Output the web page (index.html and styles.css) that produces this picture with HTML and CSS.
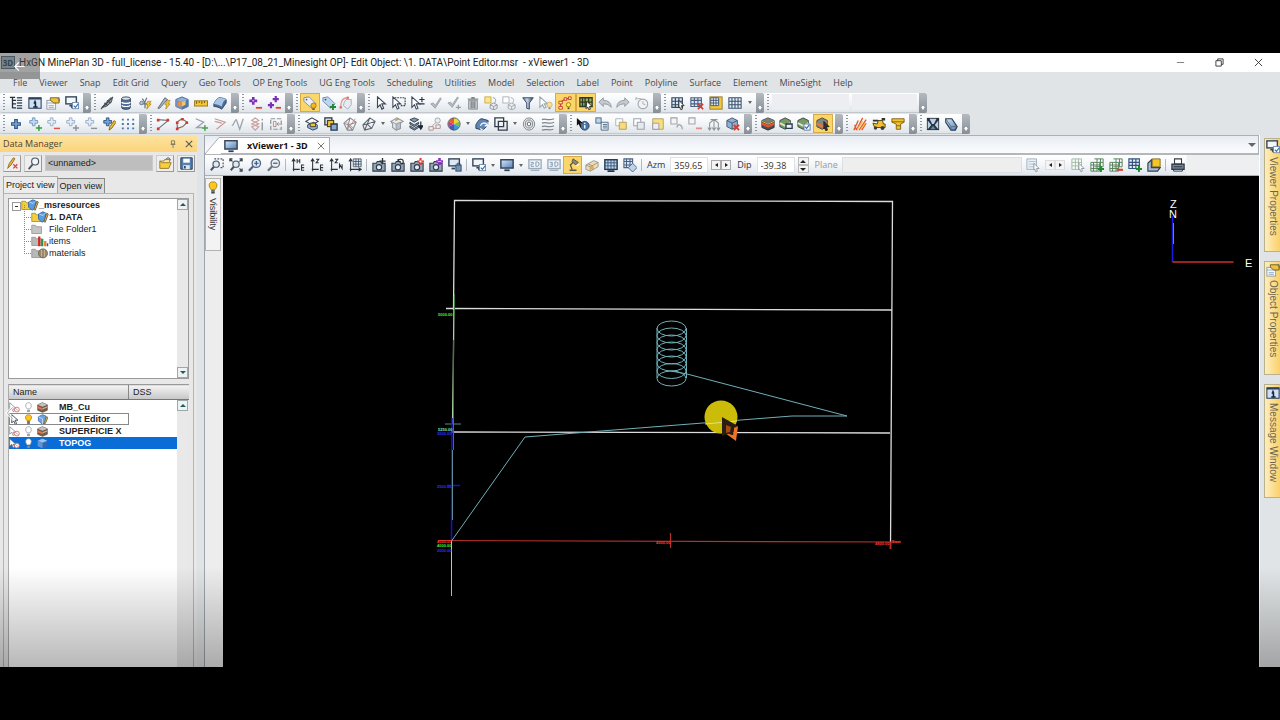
FILE: index.html
```html
<!DOCTYPE html>
<html lang="en">
<head>
<meta charset="utf-8">
<title>HxGN MinePlan 3D</title>
<link rel="stylesheet" href="styles.css">
</head>
<body>
<svg class="sprite" aria-hidden="true">
  <defs>
    <linearGradient id="g-blue" x1="0" y1="0" x2="1" y2="1"><stop offset="0" stop-color="#dbe9f8"/><stop offset="1" stop-color="#4f7fb8"/></linearGradient>
    <linearGradient id="g-steel" x1="0" y1="0" x2="1" y2="0"><stop offset="0" stop-color="#56708f"/><stop offset=".4" stop-color="#c6d8ea"/><stop offset="1" stop-color="#34495f"/></linearGradient>
  </defs>
  <symbol id="cursor" viewBox="0 0 16 16"><path d="M4 1v12l3-3 2 5 2-1-2-5h4z" fill="#fff" stroke="#3b4657" stroke-width="1.3"/></symbol>
  <symbol id="cursor-box" viewBox="0 0 16 16"><path d="M3 2h12v9h-5" fill="none" stroke="#3b4657" stroke-width="1.4" stroke-dasharray="2 1"/><path d="M1 1v12l3-3 2 5 2-1-2-5h4z" fill="#fff" stroke="#3b4657" stroke-width="1.2"/></symbol>
  <symbol id="cursor-pm" viewBox="0 0 16 16"><path d="M1 1v12l3-3 2 5 2-1-2-5h4z" fill="#fff" stroke="#3b4657" stroke-width="1.2"/><path d="M12.500 1v6M9.500 4h6M9.500 9h6" stroke="#2a3340" stroke-width="1.3"/></symbol>
  <symbol id="cursor-bulb" viewBox="0 0 16 16"><path d="M1 1v12l3-3 2 4 2-1-2-4h4z" fill="#fff" stroke="#9aa4b0" stroke-width="1.2"/><circle cx="12" cy="10" r="3" fill="#f6e29a" stroke="#c7b36a"/><path d="M11 14h2" stroke="#888" stroke-width="2"/></symbol>
  <symbol id="tree" viewBox="0 0 16 16"><path d="M1 1.500h6M4 2v12M4 5h4M4 9h4M4 13.500h4" stroke="#27303c" stroke-width="1.5" fill="none"/><path d="M9 2h6M9 5h6M9 8h6M9 11h6M9 14h6" stroke="#44566c" stroke-width="1.6"/></symbol>
  <symbol id="info" viewBox="0 0 16 16"><rect x="1" y="2" width="14" height="12" fill="#cfe0f3" stroke="#2b405c" stroke-width="1.2"/><path d="M1 3h14" stroke="#2b405c" stroke-width="2"/><path d="M8 5v2M6.500 8H8.500v4M6 12.500h5" stroke="#132238" stroke-width="1.8" fill="none"/></symbol>
  <symbol id="props" viewBox="0 0 16 16"><rect x="1" y="5" width="10" height="10" fill="#f5f8fb" stroke="#8a97a5"/><path d="M1 8h10M3 11h6M3 13h6" stroke="#8aa5c4"/><path d="M5 2h8l2 2v4H9L5 5z" fill="#efc23b" stroke="#6d5a20"/><path d="M13 2h2v4" stroke="#555" fill="none"/></symbol>
  <symbol id="monitor-check" viewBox="0 0 16 16"><rect x="1" y="1" width="12" height="8" fill="#f2f7fc" stroke="#35465a" stroke-width="1.6"/><path d="M5 11h3v3" stroke="#35465a" stroke-width="2" fill="none"/><rect x="8.500" y="7.500" width="7" height="7" fill="#fff" stroke="#6c87a8"/><path d="M10 11l2 2 3-4" stroke="#3972b0" fill="none" stroke-width="1.3"/></symbol>
  <symbol id="monitor-lock" viewBox="0 0 16 16"><rect x="1" y="1" width="12" height="8" fill="#dce9f6" stroke="#35465a" stroke-width="1.6"/><path d="M4 12h4" stroke="#35465a" stroke-width="2"/><rect x="9" y="8" width="6" height="7" fill="#7293b8" stroke="#2d4260"/><path d="M10.500 8V6h3v2" fill="none" stroke="#2d4260"/></symbol>
  <symbol id="monitor" viewBox="0 0 16 16"><rect x="1" y="2" width="14" height="9.500" fill="url(#g-blue)" stroke="#2f3f52" stroke-width="1.6"/><path d="M5 14h6" stroke="#2f3f52" stroke-width="2"/></symbol>
  <symbol id="monitor-2" viewBox="0 0 16 16"><rect x="1" y="2" width="14" height="10" fill="#eef3f8" stroke="#9aabbd" stroke-width="1.5"/><path d="M3 14h10" stroke="#9aabbd" stroke-width="1.5"/><path d="M3 5h3v2H3.500v2.500H7M9 4.500v5h1.500l2-1v-3l-2-1z" stroke="#8295a9" fill="none"/></symbol>
  <symbol id="monitor-3" viewBox="0 0 16 16"><rect x="1" y="2" width="14" height="10" fill="#eef3f8" stroke="#9aabbd" stroke-width="1.5"/><path d="M3 14h10" stroke="#9aabbd" stroke-width="1.5"/><path d="M3 5h3v4.500H3M4 7h2M9 4.500v5h1.500l2-1v-3l-2-1z" stroke="#8295a9" fill="none"/></symbol>
  <symbol id="monitor-grid" viewBox="0 0 16 16"><rect x="1" y="2" width="14" height="11" fill="#bcd7f1" stroke="#23344a" stroke-width="1.6"/><path d="M1 5.500h14M1 9h14M4.500 2v11M8 2v11M11.500 2v11" stroke="#35506f"/><path d="M4 15h8" stroke="#23344a" stroke-width="2"/></symbol>
  <symbol id="drill" viewBox="0 0 16 16"><path d="M2 13L11 3l2-1 1 1-1 4-6 5z" fill="#9aa2aa" stroke="#3f464e"/><path d="M1 15L15 1M5 8l4 3M8 5l4 3" stroke="#3f464e" stroke-width="1.2"/></symbol>
  <symbol id="db" viewBox="0 0 16 16"><path d="M3 3v10c0 3 10 3 10 0V3z" fill="#4d6f9a" stroke="#2b3b50"/><ellipse cx="8" cy="3" rx="5" ry="2" fill="#d2e2f2" stroke="#2b3b50"/><path d="M3 7c1 2 9 2 10 0M3 10.500c1 2 9 2 10 0" fill="none" stroke="#fff" stroke-width="1.300"/></symbol>
  <symbol id="bolt-plant" viewBox="0 0 16 16"><path d="M2 9h11M5 3l3 5M10 2l-3 7M8 8v6" stroke="#65758a" stroke-width="1.4"/><circle cx="4" cy="8" r="2" fill="#b6c8dc" stroke="#65758a"/><path d="M11 6h4l-2 3h2l-5 6 1-5H9z" fill="#f4c42e" stroke="#a07b12" stroke-width=".7"/></symbol>
  <symbol id="bolt-pen" viewBox="0 0 16 16"><path d="M1 14L9 2l3 2-9 10z" fill="#a5b1bf" stroke="#56616e"/><path d="M12 5h3l-2 4h2l-5 6 1-5H9z" fill="#f4c42e" stroke="#a07b12" stroke-width=".7"/></symbol>
  <symbol id="cube-color" viewBox="0 0 16 16"><path d="M8 1l7 3v8l-7 3-7-3V4z" fill="#8cb2dc" stroke="#3f6090"/><path d="M1 4l7 3v8l-7-3z" fill="#6f93c4"/><path d="M8 7l7-3v8l-7 3z" fill="#5078b2"/><circle cx="6" cy="9" r="3" fill="#ec8a3e"/><path d="M8 7l4-2v5l-4 2z" fill="#f3c85f"/></symbol>
  <symbol id="ruler" viewBox="0 0 16 16"><rect x=".5" y="5.500" width="15" height="6" fill="#f6c531" stroke="#94741a"/><path d="M3 6v3M6 6v2M9 6v3M12 6v2" stroke="#5e480b"/></symbol>
  <symbol id="surface" viewBox="0 0 16 16"><path d="M1 9c2-4 4-7 7-7 2 0 5 1 7 2v4l-5 7c-3-2-6-3-9-3z" fill="#4a6d98" stroke="#2a3e58"/><path d="M1 9c2-4 4-7 7-7 2 0 5 1 7 2-3 1-4 4-5 8-3-2-6-3-9-3z" fill="#a9c5e6"/></symbol>
  <symbol id="plus-v" viewBox="0 0 16 16"><path d="M6 1v9M1.500 5.500h9" stroke="#7b2fb5" stroke-width="3"/><path d="M5 5.500h2" stroke="#e3c9f3" stroke-width="1.500"/><path d="M9 13.500h7" stroke="#e0402f" stroke-width="2"/></symbol>
  <symbol id="plus-v2" viewBox="0 0 16 16"><path d="M10 0v7M6.500 3.500h7M4.500 7v7M1 10.500h7" stroke="#7b2fb5" stroke-width="2.500"/><path d="M10 13.500h6" stroke="#e0402f" stroke-width="2"/></symbol>
  <symbol id="tag-bulb" viewBox="0 0 16 16"><path d="M1 2l6-1 8 8-5 5-9-8z" fill="#e7eef6" stroke="#7b8ca0"/><circle cx="4" cy="4" r="1" fill="#556"/><circle cx="12" cy="11" r="3" fill="#f7b718" stroke="#a87407"/><path d="M10.500 15h3" stroke="#444" stroke-width="1.500"/></symbol>
  <symbol id="tag-plus" viewBox="0 0 16 16"><path d="M1 2l6-1 8 8-5 5-9-8z" fill="#bcd6f1" stroke="#6a87aa"/><circle cx="4" cy="4" r="1" fill="#446"/><path d="M12.500 9v7M9 12.500h7" stroke="#218a2d" stroke-width="2.200"/></symbol>
  <symbol id="tag-line" viewBox="0 0 16 16"><path d="M2 12C2 6 4 2 10 2" stroke="#e59a93" fill="none" stroke-width="1.500"/><path d="M6 7l2-3h6v6l-4 5-5-4z" fill="#e6ebf1" stroke="#9fabb8"/><circle cx="2" cy="13" r="1.500" fill="#d9746a"/><circle cx="10" cy="2" r="1.500" fill="#d9746a"/></symbol>
  <symbol id="check" viewBox="0 0 16 16"><path d="M2 9l3-1 2 3 6-9 1 1-7 11z" fill="#b9bec4" stroke="#989ea6"/></symbol>
  <symbol id="check-p" viewBox="0 0 16 16"><path d="M1 8l3-1 2 3 6-9 1 1-7 11z" fill="#b9bec4" stroke="#989ea6"/><path d="M10 13h6M13 10v5" stroke="#989ea6" stroke-width="1.500"/></symbol>
  <symbol id="trash" viewBox="0 0 16 16"><path d="M3 5h10v10H3z" fill="#c8ccd0" stroke="#84898f"/><path d="M2 3.500h12M6 2h4M6 6v8M8 6v8M10 6v8" stroke="#84898f" stroke-width="1.500"/></symbol>
  <symbol id="copy-y" viewBox="0 0 16 16"><rect x="1" y="1" width="7" height="7" fill="#ffe58a" stroke="#c9a94c"/><path d="M10 2c4 0 4 4 2 6" fill="none" stroke="#8b939c"/><path d="M7 10l4-2 4 2v4l-4 2-4-2zM7 10l4 2 4-2M11 12v4" fill="#e8ebee" stroke="#8b939c"/></symbol>
  <symbol id="copy-g" viewBox="0 0 16 16"><rect x="1" y="1" width="7" height="7" fill="#fff" stroke="#a8adb4"/><path d="M10 2c4 0 4 4 2 6" fill="none" stroke="#a0a6ae"/><path d="M7 10l4-2 4 2v4l-4 2-4-2zM7 10l4 2 4-2M11 12v4" fill="#e8ebee" stroke="#a0a6ae"/></symbol>
  <symbol id="funnel" viewBox="0 0 16 16"><path d="M2 2h12l-4.500 6v7l-3-1V8z" fill="url(#g-steel)" stroke="#2c3e55"/></symbol>
  <symbol id="path-bulb" viewBox="0 0 16 16"><path d="M3 14V7l6-4h5" fill="none" stroke="#c53a26" stroke-width="1.300"/><path d="M1 12h4v3H1zM1 6h4v3H1zM7 2h3v3H7zM12 1h3v3h-3z" fill="#fde8b0" stroke="#c53a26"/><circle cx="12" cy="10" r="2.500" fill="#ffe94f" stroke="#9a7c0b"/><path d="M11 14h2" stroke="#444" stroke-width="2"/></symbol>
  <symbol id="grid-pick" viewBox="0 0 16 16"><path d="M1 2h14v10H1zM4 2v10M7 2v10M11 2v10M1 7h14" fill="#9fb25a" stroke="#2b3a26" stroke-width="1.500"/><path d="M9 6l6 6h-3l1 3-2 .5-1-3-2 2z" fill="#fff" stroke="#222"/></symbol>
  <symbol id="undo" viewBox="0 0 16 16"><path d="M1 7l5-5v3c6 0 9 3 9 8-2-3-5-4-9-4v3z" fill="#c5cad0" stroke="#8e959d"/></symbol>
  <symbol id="redo" viewBox="0 0 16 16"><path d="M15 7l-5-5v3c-6 0-9 3-9 8 2-3 5-4 9-4v3z" fill="#c5cad0" stroke="#8e959d"/></symbol>
  <symbol id="clock" viewBox="0 0 16 16"><circle cx="9" cy="9" r="5.500" fill="#f1f2f4" stroke="#a4a9b0" stroke-width="1.300"/><path d="M9 6v3l3 1M1 3h6M2 1L0 3l2 2" fill="none" stroke="#a4a9b0"/></symbol>
  <symbol id="grid-cur" viewBox="0 0 16 16"><path d="M1 2h12v11H1zM5 2v11M9 2v11M1 6h12M1 10h12" fill="#d7e7f7" stroke="#34465c" stroke-width="1.300"/><path d="M9 5l6 6h-3l1 4-2 .5-1-3-1 1z" fill="#fff" stroke="#222"/></symbol>
  <symbol id="grid-x" viewBox="0 0 16 16"><path d="M1 2h12v10H1zM5 2v10M9 2v10M1 5h12M1 9h12" fill="#d7e7f7" stroke="#4b6180" stroke-width="1.300"/><path d="M9 9l6 6M15 9l-6 6" stroke="#d8372a" stroke-width="1.800"/></symbol>
  <symbol id="grid-y" viewBox="0 0 16 16"><rect x="1" y="1" width="14" height="14" fill="#f5c83a" stroke="#8f7428"/><path d="M2 2h9v9H2zM5 2v9M8 2v9M2 5h9M2 8h9" fill="#e3edf7" stroke="#3c5270"/></symbol>
  <symbol id="grid" viewBox="0 0 16 16"><path d="M1 2h14v12H1zM4.500 2v12M8 2v12M11.500 2v12M1 6h14M1 10h14" fill="#e6f0fa" stroke="#3a4f69" stroke-width="1.200"/></symbol>
  <symbol id="plus-b" viewBox="0 0 16 16"><path d="M6.500 3h3v3.500H13v3H9.500V13h-3V9.500H3v-3h3.500z" fill="#79a5d8" stroke="#2c5184" stroke-width="1.200"/></symbol>
  <symbol id="plus-g" viewBox="0 0 16 16"><path d="M5 1h3v3h3v3H8v3H5V7H2V4h3z" fill="#c4daf1" stroke="#6c94c2"/><path d="M12.500 9v7M9 12.500h7" stroke="#2f9a37" stroke-width="1.600"/></symbol>
  <symbol id="plus-r" viewBox="0 0 16 16"><path d="M5 1h3v3h3v3H8v3H5V7H2V4h3z" fill="#e3ecf6" stroke="#93acc8"/><path d="M9 13h7" stroke="#dd5048" stroke-width="1.600"/></symbol>
  <symbol id="plus-w" viewBox="0 0 16 16"><path d="M5 1h3v3h3v3H8v3H5V7H2V4h3z" fill="#e3ecf6" stroke="#93acc8"/><path d="M12.500 9v7M9 12.500h7" stroke="#8b939d" stroke-width="1.600"/></symbol>
  <symbol id="plus-m" viewBox="0 0 16 16"><path d="M5 1h3v3h3v3H8v3H5V7H2V4h3z" fill="#e3ecf6" stroke="#93acc8"/><path d="M8 13h7" stroke="#8b939d" stroke-width="1.600"/></symbol>
  <symbol id="plus-pen" viewBox="0 0 16 16"><path d="M5 1h3v3h3v3H8v3H5V7H2V4h3z" fill="#75a1d6" stroke="#2c5184"/><path d="M8 15l1-4 5-7 2 2-5 7z" fill="#edbb38" stroke="#815f12"/></symbol>
  <symbol id="dots" viewBox="0 0 16 16"><path d="M1 3h14M1 8h14M1 13h14" stroke="#4577b6" stroke-width="2.200" stroke-dasharray="2.200 3.700"/></symbol>
  <symbol id="poly1" viewBox="0 0 16 16"><path d="M2 3l12 1L3 13" fill="none" stroke="#6f7680" stroke-width="1.300"/><path d="M1 2h3v3H1zM12 2h3v3h-3zM1 12h3v3H1z" fill="#d4392e"/></symbol>
  <symbol id="poly2" viewBox="0 0 16 16"><path d="M3 13L2 6l6-4 6 4-5 5z" fill="none" stroke="#8a6a65" stroke-width="1.300"/><path d="M1 12h3v3H1zM1 5h3v3H1zM7 1h3v3H7zM12 5h3v3h-3z" fill="#d4392e"/></symbol>
  <symbol id="poly3" viewBox="0 0 16 16"><path d="M2 2l9 4-8 6h6" fill="none" stroke="#9aa1aa" stroke-width="1.500"/><path d="M12.500 9v7M9 12.500h7" stroke="#4d9b53" stroke-width="1.600"/></symbol>
  <symbol id="poly4" viewBox="0 0 16 16"><path d="M2 2l12 4-10 8M2 5l8 2" fill="none" stroke="#c89a98" stroke-width="1.300"/></symbol>
  <symbol id="poly5" viewBox="0 0 16 16"><path d="M1 10C4 9 4 3 6 3l4 11 4-12" fill="none" stroke="#9ea4ac" stroke-width="1.500"/></symbol>
  <symbol id="poly6" viewBox="0 0 16 16"><path d="M6 1L2 4l8 4-8 3 4 4 4-4-8-3 8-4z" fill="none" stroke="#c7a09e" stroke-width="1.300"/><path d="M14 2v2M14 6v9" stroke="#8f959d" stroke-width="1.500"/></symbol>
  <symbol id="poly7" viewBox="0 0 16 16"><path d="M2 2h12v12H2z" fill="none" stroke="#8f959d" stroke-dasharray="5 2" stroke-width="1.400"/><path d="M5 5h3v6H5zM13 8H9m2-2L9 8l2 2" fill="none" stroke="#a78482"/></symbol>
  <symbol id="cube-y" viewBox="0 0 16 16"><path d="M8 1l7 4-7 4-7-4z" fill="#f7f8f9" stroke="#37424f" stroke-width="1.300"/><path d="M3 9l7-3 4 3v4l-5 2-6-3z" fill="#8eb4de" stroke="#2b3a4b"/><path d="M6 7h6v4H6z" fill="#f3c531" stroke="#3b3d28"/></symbol>
  <symbol id="sq-y" viewBox="0 0 16 16"><rect x="1" y="1" width="8" height="8" fill="#d9e6f4" stroke="#303b48" stroke-width="1.500"/><rect x="4" y="4" width="7" height="7" fill="#f6c62f" stroke="#514313" stroke-width="1.300"/><path d="M8 8h7v7H8z" fill="#86acd6" stroke="#26364a" stroke-width="1.500"/></symbol>
  <symbol id="mesh-r" viewBox="0 0 16 16"><path d="M8 1l7 5-4 9H5L1 7zM8 1L6 9l9-3M1 7l5 2 5 6M6 9l-1 6" fill="none" stroke="#858b93" stroke-width="1.200"/><path d="M5 14l9-12M3 5l9 8" stroke="#d98680"/></symbol>
  <symbol id="mesh" viewBox="0 0 16 16"><path d="M9 1l6 4-4 8-8 2-2-6zM9 1L6 8l9-3M1 9l5-1 5 5M6 8l-3 7" fill="none" stroke="#5a626c" stroke-width="1.200"/></symbol>
  <symbol id="house" viewBox="0 0 16 16"><path d="M1 5l7-4 7 4-3 2v6l-5 2-4-3V8z" fill="#e6e8eb" stroke="#8e949b" stroke-width="1.200"/><path d="M7 8l5-2v7l-5 2zM1 5l6 3" fill="#b9bfc6" stroke="#8e949b"/><path d="M6 4l4-2" stroke="#b8a866" stroke-width="2"/></symbol>
  <symbol id="stack-down" viewBox="0 0 16 16"><path d="M6 1l5 2-5 3-5-3zM1 6l5 3 5-3v2l-5 3-5-3zM1 10l5 3 5-3v2l-5 3-5-3z" fill="#8396aa" stroke="#2c3848"/><path d="M13.500 5v7M11 10l2.500 4 2.500-4z" fill="#1d2833" stroke="#1d2833" stroke-width="1.300"/></symbol>
  <symbol id="scatter" viewBox="0 0 16 16"><path d="M3 13l4-5 4-3M3 13h6l4-5" fill="none" stroke="#c69591"/><circle cx="11" cy="4" r="3" fill="#eee" stroke="#9ba0a7"/><path d="M1 11h5v4H1zM9 9h5v4H9z" fill="#eee" stroke="#a58e8d"/></symbol>
  <symbol id="wheel" viewBox="0 0 16 16"><path d="M8 8V1a7 7 0 0 1 6 4z" fill="#f3d62f"/><path d="M8 8l6-3a7 7 0 0 1 0 6z" fill="#7cc04b"/><path d="M8 8l6 3a7 7 0 0 1-6 4z" fill="#3a9bd6"/><path d="M8 8v7a7 7 0 0 1-6-4z" fill="#4d55b8"/><path d="M8 8l-6 3a7 7 0 0 1 0-6z" fill="#c53c8e"/><path d="M8 8L2 5a7 7 0 0 1 6-4z" fill="#ea5a2c"/><circle cx="8" cy="8" r="7" fill="none" stroke="#555"/></symbol>
  <symbol id="refresh-surf" viewBox="0 0 16 16"><path d="M1 9c2-4 4-7 7-7l7 2v5l-6 6-8-2z" fill="#5f85b3" stroke="#28394f"/><path d="M6 10c2-4 6-4 8-1M15 6v4h-4M14 13c-2 3-6 3-8 0" fill="none" stroke="#eaf2fb" stroke-width="1.500"/></symbol>
  <symbol id="boxes" viewBox="0 0 16 16"><path d="M1 1h10v10H1z" fill="none" stroke="#333d49" stroke-width="1.500"/><path d="M5 5h10v10H5z" fill="none" stroke="#333d49" stroke-width="1.500"/></symbol>
  <symbol id="rings" viewBox="0 0 16 16"><ellipse cx="8" cy="8" rx="6.500" ry="7" fill="#e4e6e8" stroke="#7b828a"/><ellipse cx="8" cy="8" rx="4.200" ry="4.600" fill="none" stroke="#7b828a"/><ellipse cx="8" cy="8" rx="2" ry="2.200" fill="#fff" stroke="#555c64"/></symbol>
  <symbol id="waves" viewBox="0 0 16 16"><path d="M1 3c4-2 6 2 14-1M1 7c5-2 7 2 14-1M1 11c4-2 7 2 14-1M1 15c5-2 8 1 13-1" fill="none" stroke="#7f868e" stroke-width="1.400"/></symbol>
  <symbol id="info-cur" viewBox="0 0 16 16"><circle cx="10" cy="10" r="5" fill="#4b75a8" stroke="#24405f"/><path d="M10 9v4M10 6.500v1.500" stroke="#fff" stroke-width="1.500"/><path d="M1 1v9l2-2 2 4 1-1-1-4h3z" fill="#111"/></symbol>
  <symbol id="sq-list" viewBox="0 0 16 16"><rect x="1" y="1" width="6" height="6" fill="#bcd5ef" stroke="#44607f"/><path d="M7 6h8v9H7z" fill="#eef3f8" stroke="#44607f"/><path d="M9 8.500h5M9 10.500h5M9 12.500h5" stroke="#44607f"/></symbol>
  <symbol id="sq-y2" viewBox="0 0 16 16"><path d="M2 2h8v8H2z" fill="#fff" stroke="#a8adb3"/><path d="M6 6h8v8H6z" fill="#f8dc79" stroke="#ad9857"/></symbol>
  <symbol id="sq-g2" viewBox="0 0 16 16"><path d="M2 2h8v8H2z" fill="#fff" stroke="#9da3aa" stroke-width="1.200"/><path d="M6 6h8v8H6z" fill="#e4e9ef" stroke="#9da3aa" stroke-width="1.200"/></symbol>
  <symbol id="sq-y3" viewBox="0 0 16 16"><path d="M2 2h12v12H2z" fill="#f9e07e" stroke="#aa9b66"/><path d="M2 7h7v7H2z" fill="#eceef2" stroke="#9a95a0"/></symbol>
  <symbol id="sq-arc" viewBox="0 0 16 16"><path d="M1 1h7v7H1z" fill="#f4f4f6" stroke="#9da3aa" stroke-width="1.200"/><path d="M8 12c0-5 6-4 6 2" fill="none" stroke="#9da3aa" stroke-width="1.500"/></symbol>
  <symbol id="sq-minus" viewBox="0 0 16 16"><path d="M1 1h7v7H1z" fill="#f4f4f6" stroke="#9da3aa" stroke-width="1.200"/><path d="M9 13h7" stroke="#e09089" stroke-width="2"/></symbol>
  <symbol id="fork" viewBox="0 0 16 16"><path d="M4 3h8M8 3v11M3 14V7l5-4 5 4v7M1 12l2 3 2-3M6 12l2 3 2-3M11 12l2 3 2-3" fill="none" stroke="#8f959c" stroke-width="1.200"/></symbol>
  <symbol id="cube-x" viewBox="0 0 16 16"><path d="M7 1l6 3v7l-6 3-6-3V4z" fill="#91b1d4" stroke="#3b5069"/><path d="M1 4l6 3 6-3M7 7v7" fill="none" stroke="#3b5069"/><path d="M9 9l6 6M15 9l-6 6" stroke="#d8372a" stroke-width="2"/></symbol>
  <symbol id="cube-layer" viewBox="0 0 16 16"><path d="M8 1l7 3v8l-7 3-7-3V4z" fill="#4b5058" stroke="#2b2f35"/><path d="M1 4l7-3 7 3-7 3z" fill="#7a8078"/><path d="M1 6l7 3 7-3v3l-7 3-7-3z" fill="#e9522b"/><path d="M1 5l7 3 7-3" fill="none" stroke="#f0bc40"/></symbol>
  <symbol id="cube-mon" viewBox="0 0 16 16"><path d="M7 1l6 3v7l-6 3-6-3V4z" fill="#779867" stroke="#334032"/><path d="M1 7l6 3 6-3" stroke="#dce7cf" stroke-width="2" fill="none"/><path d="M8 8h7v5H8z" fill="#eaf3fb" stroke="#28394c" stroke-width="1.500"/></symbol>
  <symbol id="cube-chk" viewBox="0 0 16 16"><path d="M7 1l6 3v7l-6 3-6-3V4z" fill="#779867" stroke="#334032"/><path d="M1 7l6 3 6-3" stroke="#dce7cf" stroke-width="2" fill="none"/><path d="M8 8h7v7H8z" fill="#fff" stroke="#527398"/><path d="M9 11l2 2 3-4" stroke="#3972b0" fill="none" stroke-width="1.500"/></symbol>
  <symbol id="cube-cur" viewBox="0 0 16 16"><path d="M7 1l6 3v7l-6 3-6-3V4z" fill="#80878b" stroke="#4a4030"/><path d="M1 6l6 3 6-3v3l-6 3-6-3z" fill="#ec762e"/><path d="M9 5l6 6h-3l1 4-2 .5-1-3-1 1z" fill="#333" stroke="#222"/></symbol>
  <symbol id="blast" viewBox="0 0 16 16"><path d="M1 15L6 4M4 15L11 1M7 15l8-12M10 15l5-8M2 9l2 6" fill="none" stroke="#e2582c" stroke-width="1.500"/><path d="M5 14l6-9M9 14l5-7" stroke="#f7b642" stroke-width="1.300"/></symbol>
  <symbol id="truck" viewBox="0 0 16 16"><path d="M1 7l5 1 1-4h5l1 4h2v4H3z" fill="#f2c02c" stroke="#4b3b12"/><circle cx="4" cy="12.500" r="2" fill="#3c3c3c"/><circle cx="12" cy="12.500" r="2.300" fill="#3c3c3c"/><path d="M1 3h6v2H1zM11 1h4v3h-4z" fill="#333"/></symbol>
  <symbol id="hopper" viewBox="0 0 16 16"><path d="M1 2h14v4l-4 2v6H6V8L1 6z" fill="#f4c42e" stroke="#7b5c12"/><path d="M1 5.500h14M6 10h5" stroke="#7b5c12"/></symbol>
  <symbol id="stope" viewBox="0 0 16 16"><path d="M1 1h14v14H1z" fill="#29313b"/><path d="M4 2h8l-3 6H7zM2 4l4 5-4 5zM14 4l-4 5 4 5z" fill="#b9d0ea"/><path d="M5 14l3-4 3 4z" fill="#6484a8"/></symbol>
  <symbol id="tube" viewBox="0 0 16 16"><path d="M2 2h7l6 9-2 4H8L2 6z" fill="url(#g-blue)" stroke="#2d3c4f" stroke-width="1.300"/><path d="M2 2l6 9v4M8 11h7" fill="none" stroke="#53677e"/></symbol>
  <symbol id="z-box" viewBox="0 0 16 16"><path d="M5 1h10v10h-3" fill="none" stroke="#48525e" stroke-width="1.400" stroke-dasharray="2 1.500"/><circle cx="7" cy="7" r="3.600" fill="#dce9f6" stroke="#48525e" stroke-width="1.300"/><path d="M4.500 10L1 14" stroke="#48525e" stroke-width="2.200"/></symbol>
  <symbol id="z-ext" viewBox="0 0 16 16"><path d="M1 4V1h3M12 1h3v3M15 12v3h-3M1 1l3 3M15 1l-3 3M15 15l-3-3" fill="none" stroke="#38424e" stroke-width="1.300"/><circle cx="8" cy="7" r="3.600" fill="#dce9f6" stroke="#48525e" stroke-width="1.300"/><path d="M5.500 10L2 14" stroke="#48525e" stroke-width="2.200"/></symbol>
  <symbol id="z-in" viewBox="0 0 16 16"><circle cx="9.500" cy="6" r="4.800" fill="#dce9f6" stroke="#52657c" stroke-width="1.500"/><path d="M6 9.500l-5 5" stroke="#52657c" stroke-width="2.500"/><path d="M9.500 3.500v5M7 6h5" stroke="#2f5789" stroke-width="1.400"/></symbol>
  <symbol id="z-out" viewBox="0 0 16 16"><circle cx="9.500" cy="6" r="4.800" fill="#e9eef4" stroke="#6a727d" stroke-width="1.500"/><path d="M6 9.500l-5 5" stroke="#6a727d" stroke-width="2.500"/><path d="M7 6h5" stroke="#4b5a6d" stroke-width="1.400"/></symbol>
  <symbol id="axis-he" viewBox="0 0 16 16"><path d="M3 15V2M1 4l2-3 2 3M2 13h8M7 1v5M10 1v5M7 3.500h3M15 8h-3v6h3M12 11h3" stroke="#2b333d" stroke-width="1.200" fill="none"/></symbol>
  <symbol id="axis-ze" viewBox="0 0 16 16"><path d="M3 15V2M1 4l2-3 2 3M2 13h8M7 1.500h3l-3 4h3M15 8h-3v6h3M12 11h3" stroke="#2b333d" stroke-width="1.200" fill="none"/></symbol>
  <symbol id="axis-zn" viewBox="0 0 16 16"><path d="M3 15V2M1 4l2-3 2 3M2 13h8M7 1.500h3l-3 4h3M12 12V7l3 5V7" stroke="#2b333d" stroke-width="1.200" fill="none"/></symbol>
  <symbol id="axis-grid" viewBox="0 0 16 16"><path d="M3 15V2M1 4l2-3 2 3M2 13h12M12 11l3 2-3 2" stroke="#2b333d" stroke-width="1.200" fill="none"/><path d="M6 1h9v9H6zM9 1v9M12 1v9M6 4h9M6 7h9" fill="#dce7f2" stroke="#48576a"/></symbol>
  <symbol id="cam" viewBox="0 0 16 16"><path d="M1 6h4l1-2h4l1 2h4v9H1z" fill="#93a4b6" stroke="#2f3b49" stroke-width="1.200"/><circle cx="8" cy="10.500" r="3" fill="#e5eef7" stroke="#2f3b49" stroke-width="1.300"/></symbol>
  <symbol id="cam-p" viewBox="0 0 16 16"><use href="#cam"/><path d="M12 0v7M8.500 3.500h7" stroke="#27313d" stroke-width="1.500"/></symbol>
  <symbol id="cam-r" viewBox="0 0 16 16"><use href="#cam"/><path d="M8 4c1-4 6-3 6 0s-2 3-3 3M8 1v3h3" fill="none" stroke="#27313d" stroke-width="1.300"/></symbol>
  <symbol id="cam-d" viewBox="0 0 16 16"><use href="#cam"/><path d="M12 0v8M8 4h8" stroke="#e23b32" stroke-width="2.400"/><circle cx="12" cy="4" r="1.200" fill="#fff"/></symbol>
  <symbol id="cam-v" viewBox="0 0 16 16"><use href="#cam"/><path d="M12 0v8M8 4h8" stroke="#8a35bd" stroke-width="3"/><path d="M10 4h4" stroke="#e8c9f5"/></symbol>
  <symbol id="lamp" viewBox="0 0 16 16"><path d="M4 14h8M7 13L5 8l4-4" stroke="#5b584e" stroke-width="1.500" fill="none"/><path d="M8 1l6 4-3 3-4-4z" fill="#8b887d" stroke="#4d4b44"/><path d="M12 9l3-2" stroke="#fff6c8" stroke-width="2"/></symbol>
  <symbol id="bars" viewBox="0 0 16 16"><path d="M1 8l9-5 5 2v5l-9 5-5-2z" fill="#eadcbd" stroke="#9a9383"/><path d="M1 8l5 2 9-5M6 10v5M4 7l5 2v5" fill="none" stroke="#9a9383"/><path d="M6 10l3-1.500V12L6 14z" fill="#e4aa45"/></symbol>
  <symbol id="grid-dia" viewBox="0 0 16 16"><path d="M1 1h10v10H1zM4 1v10M8 1v10M1 4h10M1 8h10" fill="#d7e7f7" stroke="#4b6180" stroke-width="1.200"/><path d="M11 6l5 5-5 5-5-5z" fill="#bdd3eb" stroke="#4b6180"/></symbol>
  <symbol id="list-cur" viewBox="0 0 16 16"><path d="M1 1h11v12H1z" fill="#e9eff6" stroke="#9daab9"/><path d="M3 4h8M3 7h8M3 10h8" stroke="#aebccb"/><path d="M9 6l6 6h-3l1 3-2 .5-1-3-1 1z" fill="#fff" stroke="#8c949d"/></symbol>
  <symbol id="gcur" viewBox="0 0 16 16"><path d="M1 1h11v12H1zM5 1v12M8.500 1v12M1 5h11M1 9h11" fill="#f5faf5" stroke="#9db6a0"/><path d="M9 6l6 6h-3l1 3-2 .5-1-3-1 1z" fill="#fff" stroke="#8c949d"/></symbol>
  <symbol id="gplus" viewBox="0 0 16 16"><path d="M5 1h10v9H5M1 5h10v10H1zM4 5v10M8 5v10M1 8h10M1 12h10M8 1v4M12 1v9M11 5h4" fill="none" stroke="#58825b" stroke-width="1.100"/><path d="M12.500 9v7M9 12.500h7" stroke="#218a2d" stroke-width="2.200"/></symbol>
  <symbol id="gminus" viewBox="0 0 16 16"><path d="M5 1h10v9H5M1 5h10v10H1zM4 5v10M8 5v10M1 8h10M1 12h10M8 1v4M12 1v9M11 5h4" fill="none" stroke="#58825b" stroke-width="1.100"/><path d="M9 13.500h7" stroke="#e0402f" stroke-width="2.400"/></symbol>
  <symbol id="bplus" viewBox="0 0 16 16"><path d="M1 1h12v11H1zM5 1v11M9 1v11M1 5h12M1 8.500h12" fill="#e1edf9" stroke="#34527b" stroke-width="1.300"/><path d="M12.500 9v7M9 12.500h7" stroke="#218a2d" stroke-width="2.200"/></symbol>
  <symbol id="ybox" viewBox="0 0 16 16"><path d="M1 6l4-4v9h10l-3 4H1z" fill="#a9bdd4" stroke="#323e4d" stroke-width="1.300"/><path d="M6 1h9v9H6z" fill="#f6c620" stroke="#7b6320"/></symbol>
  <symbol id="printer" viewBox="0 0 16 16"><path d="M4 1h8v6H4z" fill="#fff" stroke="#343c46" stroke-width="1.200"/><path d="M1 7h14v6H1z" fill="#76889c" stroke="#262e38" stroke-width="1.300"/><path d="M3 13h10v2H3zM3 10h10" fill="#e4ebf2" stroke="#262e38"/></symbol>
  <symbol id="pen-x" viewBox="0 0 16 16"><path d="M2 14l2-6 5-7 2 1-5 8z" fill="#f0b440" stroke="#8c5f1c"/><path d="M9 9l5 5M14 9l-5 5" stroke="#d9443b" stroke-width="1.600"/></symbol>
  <symbol id="search" viewBox="0 0 16 16"><circle cx="10" cy="5.500" r="4.300" fill="#f1f6fb" stroke="#4a5563" stroke-width="1.400"/><path d="M7 9l-5 6" stroke="#4a5563" stroke-width="2.200"/></symbol>
  <symbol id="open" viewBox="0 0 16 16"><path d="M1 5h5l1-2h6v3" fill="#f9e294" stroke="#8a6a14"/><path d="M1 14V5l3 2h11l-3 7z" fill="#f8cf3c" stroke="#8a6a14"/><path d="M9 2c3-2 5 0 5 2" fill="none" stroke="#333"/></symbol>
  <symbol id="save" viewBox="0 0 16 16"><path d="M1 1h14v14H1z" fill="#5680ae" stroke="#263c58" stroke-width="1.200"/><path d="M4 2h8v5H4z" fill="#fff"/><path d="M4 10h8v5H4z" fill="#dbe4ee"/><path d="M5 11h2v3H5z" fill="#263c58"/></symbol>
  <symbol id="bulb" viewBox="0 0 16 16"><path d="M8 1c-6 0-5 6-2 9h4c3-3 4-9-2-9z" fill="#ffc61b" stroke="#a77b0b"/><path d="M6 11.500h4M6 13.500h4" stroke="#3e4a59" stroke-width="1.600"/></symbol>
  <symbol id="bulb-off" viewBox="0 0 16 16"><path d="M8 1c-5 0-5 6-2 9h4c3-3 3-9-2-9z" fill="#fff" stroke="#8c9198"/><path d="M6.500 12h3v2h-3z" fill="#ddd" stroke="#777"/></symbol>
  <symbol id="cur-no" viewBox="0 0 16 16"><path d="M1 1v11l3-3 2 5 2-1-2-4h4z" fill="#fff" stroke="#6e747c"/><circle cx="11.500" cy="11" r="3.500" fill="#fff" stroke="#d76e67" stroke-width="1.300"/><path d="M9 9l5 4" stroke="#d76e67"/></symbol>
  <symbol id="cube-o" viewBox="0 0 16 16"><path d="M8 1l7 3v8l-7 3-7-3V4z" fill="#785b4b" stroke="#54504d"/><path d="M1 4l7-3 7 3-7 3z" fill="#c1c3c4"/><path d="M1 6l7 3v3l-7-3z" fill="#e8733e"/><path d="M8 9l7-3v2l-7 3z" fill="#c9b49e"/></symbol>
  <symbol id="cube-b" viewBox="0 0 16 16"><path d="M8 1l7 3v8l-7 3-7-3V4z" fill="#2f69b5"/><path d="M1 4l7-3 7 3-7 3z" fill="#9cc4ef"/><path d="M1 4l7 3v8l-7-3z" fill="#5c96d8"/></symbol>
  <symbol id="geo-pen" viewBox="0 0 16 16"><path d="M2 4l6-3 5 2v8l-5 4-6-5z" fill="#6ea4de" stroke="#2d5d97"/><path d="M2 4l6 3v8" fill="none" stroke="#dcebfa"/><path d="M10 14L14 4l2 1-4 9z" fill="#f0c04a" stroke="#5a5140"/></symbol>
  <symbol id="fold-edit" viewBox="0 0 24 16"><path d="M1 14V3h5l1 2h7v9z" fill="#f3cf3f" stroke="#a38416"/><path d="M10 4l6-3 4 2v8l-5 4-5-4z" fill="#5a9ae0" stroke="#205ca6"/><path d="M11 4l5 2 3-3" fill="none" stroke="#d5e7fa"/><path d="M17 14l4-11 2 1-4 11z" fill="#e8b84a" stroke="#504733"/></symbol>
  <symbol id="fold" viewBox="0 0 24 16"><path d="M1 14V3h5l1 2h7v9z" fill="#c4c4c4" stroke="#8e8e8e"/></symbol>
  <symbol id="fold-items" viewBox="0 0 24 16"><path d="M1 14V3h5l1 2h7v9z" fill="#b9b9b9" stroke="#8e8e8e"/><path d="M11 15V2" stroke="#d9241d" stroke-width="3"/><path d="M15 15V5" stroke="#1e9b46" stroke-width="3"/><path d="M19 15V8" stroke="#ef7d22" stroke-width="3"/><path d="M22 15v-4" stroke="#2d57c8" stroke-width="2"/></symbol>
  <symbol id="fold-mat" viewBox="0 0 24 16"><path d="M1 14V3h5l1 2h7v9z" fill="#b9b9b9" stroke="#8e8e8e"/><circle cx="16" cy="8.500" r="6" fill="#9a8a6d" stroke="#5f5747"/><path d="M14 4v9M18 4v9" stroke="#cfbf9e"/></symbol>
</svg>

<div class="app">
  <header class="titlebar">
    <span class="logo">3D</span>
    <h1>HxGN MinePlan 3D - full_license - 15.40 - [D:\...\P17_08_21_Minesight OP]- Edit Object: \1. DATA\Point Editor.msr &nbsp;- xViewer1 - 3D</h1>
    <div class="winbtns">
      <button aria-label="Minimize"><svg viewBox="0 0 10 10"><path d="M1 5h8" stroke="#777"/></svg></button>
      <button aria-label="Restore"><svg viewBox="0 0 10 10"><path d="M1 3h6v6H1zM3 3V1h6v6H7" fill="none" stroke="#333"/></svg></button>
      <button aria-label="Close"><svg viewBox="0 0 10 10"><path d="M1 1l8 8M9 1L1 9" stroke="#333"/></svg></button>
    </div>
    <button class="back" aria-label="Back"><svg viewBox="0 0 16 16"><path d="M1 8h12M6 3L1 8l5 5" fill="none" stroke="#fff" stroke-width="1.500"/></svg></button>
  </header>

  <nav class="menubar" aria-label="Main menu">
    <button>File</button><button>Viewer</button><button>Snap</button><button>Edit Grid</button><button>Query</button><button>Geo Tools</button><button>OP Eng Tools</button><button>UG Eng Tools</button><button>Scheduling</button><button>Utilities</button><button>Model</button><button>Selection</button><button>Label</button><button>Point</button><button>Polyline</button><button>Surface</button><button>Element</button><button>MineSight</button><button>Help</button>
  </nav>

  <div class="toolrow">
    <div class="group w91"><button aria-label="Data manager"><svg><use href="#tree"/></svg></button><button aria-label="Message window"><svg><use href="#info"/></svg></button><button aria-label="Object properties"><svg><use href="#props"/></svg></button><button aria-label="Viewer properties"><svg><use href="#monitor-check"/></svg></button></div>
    <div class="group w148"><button aria-label="Drillhole"><svg><use href="#drill"/></svg></button><button aria-label="Database"><svg><use href="#db"/></svg></button><button aria-label="Planner"><svg><use href="#bolt-plant"/></svg></button><button aria-label="Quick edit"><svg><use href="#bolt-pen"/></svg></button><button aria-label="Block model"><svg><use href="#cube-color"/></svg></button><button aria-label="Measure"><svg><use href="#ruler"/></svg></button><button aria-label="Surface"><svg><use href="#surface"/></svg></button></div>
    <div class="group w54"><button aria-label="Remove point"><svg><use href="#plus-v"/></svg></button><button aria-label="Remove points"><svg><use href="#plus-v2"/></svg></button></div>
    <div class="group w72"><button class="on" aria-label="Show labels"><svg><use href="#tag-bulb"/></svg></button><button aria-label="Add label"><svg><use href="#tag-plus"/></svg></button><button aria-label="Label line"><svg><use href="#tag-line"/></svg></button></div>
    <div class="group w296"><button aria-label="Select"><svg><use href="#cursor"/></svg></button><button aria-label="Box select"><svg><use href="#cursor-box"/></svg></button><button aria-label="Toggle select"><svg><use href="#cursor-pm"/></svg></button><button aria-label="Accept"><svg><use href="#check"/></svg></button><button aria-label="Accept more"><svg><use href="#check-p"/></svg></button><button aria-label="Delete"><svg><use href="#trash"/></svg></button><button aria-label="Copy to object"><svg><use href="#copy-y"/></svg></button><button aria-label="Move to object"><svg><use href="#copy-g"/></svg></button><button aria-label="Filter"><svg><use href="#funnel"/></svg></button><button aria-label="Highlight selection"><svg><use href="#cursor-bulb"/></svg></button><button class="on" aria-label="Show nodes"><svg><use href="#path-bulb"/></svg></button><button class="on" aria-label="Pick snap"><svg><use href="#grid-pick"/></svg></button><button aria-label="Undo"><svg><use href="#undo"/></svg></button><button aria-label="Redo"><svg><use href="#redo"/></svg></button><button aria-label="History"><svg><use href="#clock"/></svg></button></div>
    <div class="group w103"><button aria-label="Grid pick"><svg><use href="#grid-cur"/></svg></button><button aria-label="Grid remove"><svg><use href="#grid-x"/></svg></button><button aria-label="Grid highlight"><svg><use href="#grid-y"/></svg></button><button aria-label="Grid set"><svg><use href="#grid"/></svg></button><button class="caret" aria-label="Grid options"></button></div>
    <div class="group w163 fields"><input class="f1" aria-label="Grid name" disabled><input class="f2" aria-label="Grid plane" disabled></div>
  </div>
  <div class="toolrow">
    <div class="group w147"><button aria-label="Create point"><svg><use href="#plus-b"/></svg></button><button aria-label="Append point"><svg><use href="#plus-g"/></svg></button><button aria-label="Delete point"><svg><use href="#plus-r"/></svg></button><button aria-label="Insert point"><svg><use href="#plus-w"/></svg></button><button aria-label="Drop point"><svg><use href="#plus-m"/></svg></button><button aria-label="Edit point"><svg><use href="#plus-pen"/></svg></button><button aria-label="Point grid"><svg><use href="#dots"/></svg></button></div>
    <div class="group w148"><button aria-label="Polyline"><svg><use href="#poly1"/></svg></button><button aria-label="Polygon"><svg><use href="#poly2"/></svg></button><button aria-label="Append polyline"><svg><use href="#poly3"/></svg></button><button aria-label="Offset polyline"><svg><use href="#poly4"/></svg></button><button aria-label="Smooth"><svg><use href="#poly5"/></svg></button><button aria-label="Align"><svg><use href="#poly6"/></svg></button><button aria-label="Clip"><svg><use href="#poly7"/></svg></button></div>
    <div class="group w272"><button aria-label="Extrude"><svg><use href="#cube-y"/></svg></button><button aria-label="Merge"><svg><use href="#sq-y"/></svg></button><button aria-label="Triangulate"><svg><use href="#mesh-r"/></svg></button><button aria-label="Mesh"><svg><use href="#mesh"/></svg></button><button class="caret" aria-label="Mesh options"></button><button aria-label="Solid"><svg><use href="#house"/></svg></button><button aria-label="Drape"><svg><use href="#stack-down"/></svg></button><button aria-label="Link"><svg><use href="#scatter"/></svg></button><button aria-label="Colour"><svg><use href="#wheel"/></svg></button><button class="caret" aria-label="Colour options"></button><button aria-label="Update surface"><svg><use href="#refresh-surf"/></svg></button><button aria-label="Intersect"><svg><use href="#boxes"/></svg></button><button class="caret" aria-label="Intersect options"></button><button aria-label="Contour rings"><svg><use href="#rings"/></svg></button><button aria-label="Contour lines"><svg><use href="#waves"/></svg></button></div>
    <div class="group w185"><button aria-label="Query element"><svg><use href="#info-cur"/></svg></button><button aria-label="Element list"><svg><use href="#sq-list"/></svg></button><button aria-label="Copy element"><svg><use href="#sq-y2"/></svg></button><button aria-label="Paste element"><svg><use href="#sq-g2"/></svg></button><button aria-label="Scale"><svg><use href="#sq-y3"/></svg></button><button aria-label="Rotate"><svg><use href="#sq-arc"/></svg></button><button aria-label="Remove"><svg><use href="#sq-minus"/></svg></button><button aria-label="Explode"><svg><use href="#fork"/></svg></button><button aria-label="Delete solid"><svg><use href="#cube-x"/></svg></button></div>
    <div class="group w91"><button aria-label="Model view"><svg><use href="#cube-layer"/></svg></button><button aria-label="Model display"><svg><use href="#cube-mon"/></svg></button><button aria-label="Model check"><svg><use href="#cube-chk"/></svg></button><button class="on" aria-label="Model query"><svg><use href="#cube-cur"/></svg></button></div>
    <div class="group w74"><button aria-label="Blast"><svg><use href="#blast"/></svg></button><button aria-label="Haulage"><svg><use href="#truck"/></svg></button><button aria-label="Reserves"><svg><use href="#hopper"/></svg></button></div>
    <div class="group w53"><button aria-label="Ring design"><svg><use href="#stope"/></svg></button><button aria-label="Tunnel"><svg><use href="#tube"/></svg></button></div>
  </div>

  <main class="work">
    <aside class="manager">
      <div class="mhead"><h2>Data Manager</h2><button aria-label="Pin"><svg viewBox="0 0 10 10"><path d="M3 1h4v4H3zM2 5.500h6M5 6v4" fill="none" stroke="#6c6857"/></svg></button><button aria-label="Close panel"><svg viewBox="0 0 10 10"><path d="M1 1l8 8M9 1L1 9" stroke="#5c5a50" stroke-width="1.400"/></svg></button></div>
      <div class="mtools"><button aria-label="Clear filter"><svg><use href="#pen-x"/></svg></button><button aria-label="Search"><svg><use href="#search"/></svg></button><input aria-label="View name" value="&lt;unnamed&gt;"><button aria-label="Open"><svg><use href="#open"/></svg></button><button aria-label="Save"><svg><use href="#save"/></svg></button></div>
      <div class="mtabs"><button class="sel">Project view</button><button>Open view</button></div>
      <div class="mbody">
        <div class="treebox">
          <ul class="tree">
            <li class="root"><svg class="wide"><use href="#fold-edit"/></svg><b>_msresources</b></li>
            <li><svg class="wide"><use href="#fold-edit"/></svg><b>1. DATA</b></li>
            <li><svg class="wide"><use href="#fold"/></svg>File Folder1</li>
            <li><svg class="wide"><use href="#fold-items"/></svg>items</li>
            <li><svg class="wide"><use href="#fold-mat"/></svg>materials</li>
          </ul>
          <div class="vscroll"><button class="up" aria-label="Scroll tree up"></button><button class="down" aria-label="Scroll tree down"></button></div>
        </div>
        <div class="objects">
          <div class="tablewrap">
            <table>
              <thead><tr><th class="cname">Name</th><th>DSS</th></tr></thead>
              <tbody>
                <tr><td><span class="cell"><svg><use href="#cur-no"/></svg><svg><use href="#bulb-off"/></svg><svg><use href="#cube-o"/></svg><b>MB_Cu</b></span></td><td></td></tr>
                <tr class="edit"><td><span class="cell"><svg><use href="#cursor"/></svg><svg><use href="#bulb"/></svg><svg><use href="#geo-pen"/></svg><b>Point Editor</b></span></td><td></td></tr>
                <tr><td><span class="cell"><svg><use href="#cur-no"/></svg><svg><use href="#bulb-off"/></svg><svg><use href="#cube-o"/></svg><b>SUPERFICIE X</b></span></td><td></td></tr>
                <tr class="picked"><td><span class="cell"><svg><use href="#cur-no"/></svg><svg><use href="#bulb-off"/></svg><svg><use href="#cube-b"/></svg><b>TOPOG</b></span></td><td></td></tr>
              </tbody>
            </table>
            <div class="vscroll"><button class="up" aria-label="Scroll list up"></button></div>
          </div>
        </div>
      </div>
    </aside>

    <section class="viewer">
      <div class="vtabs">
        <svg class="slant" viewBox="0 0 16 18"><path d="M0 18L14 1.500h2V18z" fill="#fff"/><path d="M0 18L14 1.500h2" fill="none" stroke="#a9adb2"/></svg>
        <div class="vtab"><svg><use href="#monitor"/></svg><h2>xViewer1 - 3D</h2><button aria-label="Close viewer"><svg viewBox="0 0 10 10"><path d="M1 1l8 8M9 1L1 9" stroke="#555"/></svg></button></div>
        <button class="more" aria-label="Viewer list"></button>
      </div>
      <div class="vtools">
        <button aria-label="Zoom box"><svg><use href="#z-box"/></svg></button><button aria-label="Zoom extents"><svg><use href="#z-ext"/></svg></button><button aria-label="Zoom in"><svg><use href="#z-in"/></svg></button><button aria-label="Zoom out"><svg><use href="#z-out"/></svg></button><i></i><button aria-label="Plan view"><svg><use href="#axis-he"/></svg></button><button aria-label="EW view"><svg><use href="#axis-ze"/></svg></button><button aria-label="NS view"><svg><use href="#axis-zn"/></svg></button><button aria-label="Grid view"><svg><use href="#axis-grid"/></svg></button><i></i><button aria-label="Save camera"><svg><use href="#cam-p"/></svg></button><button aria-label="Restore camera"><svg><use href="#cam-r"/></svg></button><button aria-label="Camera target"><svg><use href="#cam-d"/></svg></button><button aria-label="Camera centre"><svg><use href="#cam-v"/></svg></button><button aria-label="Lock view"><svg><use href="#monitor-lock"/></svg></button><i></i><button aria-label="Properties"><svg><use href="#monitor-check"/></svg></button><button class="caret" aria-label="Properties options"></button><button aria-label="Background"><svg><use href="#monitor"/></svg></button><button class="caret" aria-label="Background options"></button><button aria-label="2D"><svg><use href="#monitor-2"/></svg></button><button aria-label="3D"><svg><use href="#monitor-3"/></svg></button><button class="on" aria-label="Lighting"><svg><use href="#lamp"/></svg></button><button aria-label="Clip volume"><svg><use href="#bars"/></svg></button><button aria-label="Show grid"><svg><use href="#monitor-grid"/></svg></button><button aria-label="Grid snap"><svg><use href="#grid-dia"/></svg></button><i></i>
        <label for="azm">Azm</label><input id="azm" class="num" value="359.65"><span class="pair"><button class="lf" aria-label="Azimuth down"></button><button class="rt" aria-label="Azimuth up"></button></span>
        <label for="dip">Dip</label><input id="dip" class="num" value="-39.38"><span class="spin"><button class="up" aria-label="Dip up"></button><button class="down" aria-label="Dip down"></button></span>
        <label for="plane" class="dim">Plane</label><input id="plane" class="plane" disabled>
        <span class="tail"><button aria-label="Plane list"><svg><use href="#list-cur"/></svg></button><span class="pair faint"><button class="lf" aria-label="Previous plane"></button><button class="rt" aria-label="Next plane"></button></span><button aria-label="Pick plane"><svg><use href="#gcur"/></svg></button><button aria-label="Add planes"><svg><use href="#gplus"/></svg></button><button aria-label="Remove planes"><svg><use href="#gminus"/></svg></button><button aria-label="New grid"><svg><use href="#bplus"/></svg></button><button aria-label="Section box"><svg><use href="#ybox"/></svg></button><i></i><button aria-label="Print"><svg><use href="#printer"/></svg></button></span>
      </div>
      <div class="stage">
        <div class="side"><button class="vis"><svg><use href="#bulb"/></svg><span>Visibility</span></button></div>
        <svg class="canvas" viewBox="223 176 1036 491" preserveAspectRatio="xMidYMid slice" role="img" aria-label="3D view">
          <g fill="none" stroke="#dcdcdc" stroke-width="1.300">
            <path d="M453.500 310L454.500 200.500L892.500 201.500L890.500 549"/><path d="M446 308.500L892 310M451 432L890 433"/>
          </g>
          <path d="M454 296L453.500 350L452.500 424" stroke="#a9d3a0" stroke-width="1.300" fill="none"/>
          <path d="M454.500 294v20M453.500 340v110" stroke="#3f7d3f" fill="none"/>
          <path d="M445 424h16" stroke="#4f8f86"/>
          <path d="M452 418L451.500 541M447 485.500h13" stroke="#1414c8" stroke-width="1.500"/>
          <path d="M452.500 450v70" stroke="#5e8a9c"/>
          <path d="M451.500 541v55" stroke="#b8c4c6"/>
          <path d="M438 540.500L901 542M670.500 533v15M890.500 542v7" stroke="#b8302c" stroke-width="1.200"/>
          <g fill="none" stroke="#6fb0b8">
            <path d="M451.500 541L525 437L792 416H847L687 374L671 371"/>
            <ellipse cx="671.500" cy="328.500" rx="14.500" ry="7.500"/><ellipse cx="671.500" cy="335.500" rx="14.500" ry="7.500"/><ellipse cx="671.500" cy="342.500" rx="14.500" ry="7.500"/><ellipse cx="671.500" cy="349.500" rx="14.500" ry="7.500"/><ellipse cx="671.500" cy="356.500" rx="14.500" ry="7.500"/><ellipse cx="671.500" cy="363.500" rx="14.500" ry="7.500"/><ellipse cx="671.500" cy="371" rx="14.500" ry="7.500"/><ellipse cx="671.500" cy="378.500" rx="14.500" ry="7.500"/>
            <path d="M657 328v50M686.500 328v50"/>
          </g>
          <g class="ticks">
            <text x="438" y="316" fill="#4fe84f">5000.00</text><text x="438" y="431" fill="#7fe8b0">5250.00</text><text x="437" y="435" fill="#3030ff">3000.00</text><text x="437" y="488" fill="#3030ff">2500.00</text><text x="437" y="543" fill="#ff3a30">4000.00</text><text x="437" y="547" fill="#4fe84f">4000.00</text><text x="437" y="552" fill="#3030ff">2000.00</text><text x="656" y="544" fill="#ff3a30">4500.00</text><text x="875" y="545" fill="#ff3a30">4800.00</text><text x="892" y="543" fill="#ff3a30">East</text>
          </g>
          <path d="M1172.500 262V216" stroke="#1a1ae0" stroke-width="1.500"/><path d="M1173.500 223v21" stroke="#5a86d8"/><path d="M1172.500 262h61" stroke="#d22c2c" stroke-width="1.500"/>
          <g class="compass"><text x="1170" y="208">Z</text><text x="1169" y="218">N</text><text x="1245" y="267">E</text></g>
          <circle cx="721" cy="417" r="16.500" fill="#ccbc0a"/>
          <path d="M705 424L737 421" stroke="#dfe08a"/>
          <path d="M725 433l8 2 1-8 4-1-2 15z" fill="#ef7426"/><path d="M722 417l16 9-4 2-1 7-3-2-8 3z" fill="#2c1d14"/><path d="M726 425l5 2-1 5-4 1z" fill="#a34b18"/>
        </svg>
      </div>
    </section>

    <aside class="docks">
      <button><svg><use href="#monitor-check"/></svg><span>Viewer Properties</span></button>
      <button><svg><use href="#props"/></svg><span>Object Properties</span></button>
      <button><svg><use href="#info"/></svg><span>Message Window</span></button>
    </aside>
  </main>
  <div class="shade"></div>
  <svg class="ghost" viewBox="0 0 10 16"><path d="M8 2L2 8l6 6" fill="none" stroke="#fff" stroke-width="3"/><path d="M8 2L2 8l6 6" fill="none" stroke="#bbb"/></svg>
</div>
</body>
</html>
```

FILE: styles.css
```css
* { box-sizing: border-box; }
body {
  margin: 0;
  height: 100vh;
  padding: 53px 0;
  background: #000;
  overflow: hidden;
  font: 9px/12px "Open Sans", "Noto Sans", sans-serif;
  color: #333;
}
button, input { font: inherit; color: inherit; border: 0; padding: 0; margin: 0; background: none; border-radius: 0; min-width: 0; }
button { display: flex; align-items: center; justify-content: center; white-space: nowrap; }
h1, h2 { margin: 0; font: inherit; }
svg { display: block; flex: none; }
.sprite { position: absolute; width: 0; height: 0; }

.app { position: relative; height: 100%; display: flex; flex-direction: column; background: #e1e4e6; overflow: hidden; }

/* title bar */
.titlebar { position: relative; flex: none; height: 19px; display: flex; align-items: center; background: #fff; padding-left: 1px; }
.titlebar h1 { flex: 1; font-family: Roboto, "Open Sans", sans-serif; font-size: 10px; color: #222; padding-left: 4px; white-space: pre; }
.logo { width: 14px; height: 13px; border: 1px solid #4d6a80; background: #a9bfcc; color: #1c4258; font-weight: 700; font-size: 8px; line-height: 11px; text-align: center; }
.winbtns { display: flex; padding-right: 2px; }
.winbtns button { width: 39px; height: 19px; }
.winbtns svg { width: 9px; height: 9px; }
.back { position: absolute; left: 0; top: 0; width: 40px; height: 26px; background: rgba(70, 70, 70, .5); z-index: 2; }
.back svg { width: 13px; height: 13px; }

/* menu */
.menubar { flex: none; height: 21px; display: flex; align-items: center; gap: 12px; padding-left: 13px; color: #444a50; }

/* toolbars */
.toolrow { flex: none; display: flex; height: 21px; padding-bottom: 1px; }
.group { display: flex; align-items: stretch; flex: none; padding: 0 10px 0 7px; background:
  radial-gradient(circle, #8d949b 40%, transparent 50%) 3px 3px / 2px 3px repeat-y,
  linear-gradient(#fff, #f2f5f8 50%, #dfe5ea); position: relative; border-bottom: 1px solid #c2c8ce; border-radius: 2px 0 0 2px; }
.group::after { content: ""; position: absolute; right: 0; top: 0; bottom: -1px; width: 8px; background: linear-gradient(#b4bac0, #878e95); border-radius: 0 2px 2px 0; }
.group::before { content: ""; position: absolute; right: 2px; bottom: 2px; z-index: 1; border: 2px solid transparent; border-top: 3px solid #fff; border-bottom: 0; box-shadow: 0 -2px 0 -1px #fff; }
.group button { flex: 1 1 0; }
.group .caret { flex: 0 0 9px; }
.group svg, .vtools svg { width: 14px; height: 14px; }
.w53 { width: 53px; } .w54 { width: 54px; } .w72 { width: 72px; } .w74 { width: 74px; }
.w91 { width: 91px; } .w103 { width: 103px; } .w147 { width: 147px; } .w148 { width: 148px; }
.w163 { width: 163px; } .w185 { width: 185px; } .w272 { width: 272px; } .w296 { width: 296px; }
.on { background: #fbd66b; border: 1px solid #d8a944; }
.caret::after { content: ""; border: 2px solid transparent; border-top: 3px solid #666; border-bottom: 0; }
.fields { gap: 3px; padding: 1px 10px 2px 8px; }
.fields input { background: #eceef1; }
.f1 { flex: 77 1 0; } .f2 { flex: 65 1 0; }

/* work area */
.work { flex: 1; min-height: 0; display: flex; }
.manager { flex: none; width: 197px; display: flex; flex-direction: column; background: #e8e8e8; font: 9px/12px "Liberation Sans", Arial, sans-serif; color: #222; }
.mhead { flex: none; height: 17px; display: flex; align-items: center; gap: 5px; padding: 0 3px; background: linear-gradient(#fde3a0, #fbd47c); font-family: "Open Sans", sans-serif; }
.mhead h2 { flex: 1; color: #4a4434; }
.mhead button { width: 11px; }
.mhead svg { width: 8px; height: 8px; }
.mtools { flex: none; display: flex; gap: 3px; padding: 3px 2px 4px 3px; }
.mtools button { width: 18px; height: 17px; background: #eee; border: 1px solid #999; border-top-color: #ccc; border-left-color: #ccc; }
.mtools svg { width: 13px; height: 13px; }
.mtools input { flex: 1; height: 16px; background: #bebebe; padding-left: 2px; border: 1px solid #c9c9c9; }
.mtabs { flex: none; display: flex; align-items: flex-end; padding-left: 3px; height: 17px; }
.mtabs button { height: 15px; padding: 0 2px; border: 1px solid #888; border-left: 0; border-bottom: 0; background: #dcdcdc; }
.mtabs .sel { height: 17px; border-color: #aaa; border-left: 1px solid #aaa; background: #ececec; }
.mbody { flex: 1; min-height: 0; display: flex; flex-direction: column; gap: 5px; margin: 0 3px; padding: 4px 4px 0 4px; border: 1px solid #b5b5b5; border-bottom: 0; }
.treebox { flex: none; height: 181px; display: flex; border: 1px solid #9a9a9a; background: #fff; }
.tree { flex: 1; list-style: none; margin: 0; padding: 0; }
.tree li { position: relative; display: flex; align-items: center; height: 12px; padding-left: 22px; }
.tree li::before { content: ""; position: absolute; left: 15px; top: -6px; height: 12px; width: 6px; border: 1px dotted #888; border-width: 0 0 1px 1px; }
.tree .root { padding-left: 12px; }
.tree .root::before { left: 3px; top: 3px; width: 7px; height: 7px; border: 1px solid #999; background: linear-gradient(#333, #333) center / 3px 1px no-repeat #fff; }
.wide { width: 18px; height: 12px; }
.vscroll { flex: none; width: 11px; background: #e9e9e9; display: flex; flex-direction: column; justify-content: space-between; }
.vscroll button { width: 11px; height: 11px; background: #eef2f2; border: 1px solid #9aa; }
.up::after, .down::after, .lf::after, .rt::after { content: ""; border: 3px solid transparent; }
.up::after { border-bottom: 3px solid #1f5d5a; border-top: 0; }
.down::after { border-top: 3px solid #1f5d5a; border-bottom: 0; }
.objects { flex: 1; min-height: 0; display: flex; }
.tablewrap { position: relative; flex: 1; background: #fff; border-left: 1px solid #aaa; }
.tablewrap .vscroll { position: absolute; right: 0; top: 16px; bottom: 0; width: 12px; }
table { width: 100%; border-collapse: collapse; }
th { height: 15px; padding: 0 4px; text-align: left; font-weight: 400; background: linear-gradient(#f4f4f4, #c6c6c6); border-bottom: 1px solid #777; border-top: 1px solid #999; }
.cname { width: 120px; background: linear-gradient(90deg, transparent 119px, #888 119px), linear-gradient(#f4f4f4, #c6c6c6); }
td { padding: 0; height: 12px; }
tbody tr:first-child td { height: 13px; padding-top: 1px; }
.cell { display: flex; align-items: center; height: 12px; gap: 3px; }
.cell svg { width: 11px; height: 11px; }
.cell b { padding-left: 8px; }
.edit td:first-child { outline: 1px solid #888; outline-offset: -1px; }
.picked td { background: #0a6cd6; color: #fff; }

/* viewer */
.viewer { flex: 1; min-width: 0; margin-left: 7px; display: flex; flex-direction: column; border-left: 1px solid #9da4ab; }
.vtabs { flex: none; height: 20px; display: flex; align-items: stretch; border-top: 1px solid #a9b0b7; border-right: 1px solid #a9b0b7; border-bottom: 2px solid #b4b7ba; background: linear-gradient(#e8ecf2, #fbfcfe); }
.slant { width: 16px; height: 18px; }
.vtab { display: flex; align-items: center; gap: 9px; margin-top: 1px; padding: 0 4px 0 3px; background: #fff; border: 1px solid #a9adb2; border-width: 1px 1px 0 0; }
.vtab > svg { width: 14px; height: 14px; }
.vtab h2 { font-weight: 700; color: #111; }
.vtab button svg { width: 8px; height: 8px; }
.more { margin-left: auto; width: 12px; }
.more::after { content: ""; border: 4px solid transparent; border-top: 4px solid #666; border-bottom: 0; }
.vtools { flex: none; height: 20px; display: flex; align-items: center; padding-left: 2px; background: linear-gradient(#fff, #f3f6f9 50%, #dfe6ec); }
.vtools button { flex: 0 1 19px; height: 18px; }
.vtools .caret { flex: 0 0 9px; }
.vtools i { flex: 0 0 1px; height: 12px; background: #b3b9bf; margin: 0 2px; }
.vtools label { color: #333; margin-left: 3px; }
.vtools .num { width: 38px; height: 16px; margin-left: 5px; padding-left: 3px; background: #fff; border: 1px solid #e0e3e6; }
.vtools .dim { color: #999; margin-left: 6px; }
.vtools .plane { flex: 1 1 0; height: 16px; margin-left: 4px; margin-right: 1px; background: #eee; border: 1px solid #dcdfe2; }
.pair { display: flex; margin: 0 3px; }
.vtools .pair button { flex: none; width: 10px; height: 10px; border: 1px solid #aaa; background: #f4f4f4; }
.lf::after { border-right: 3px solid #222; border-left: 0; border-width: 2px 3px 2px 0; }
.rt::after { border-left: 3px solid #222; border-right: 0; border-width: 2px 0 2px 3px; }
.vtools .faint button { border-color: #ddd; }
.spin { display: flex; flex-direction: column; margin-left: 3px; }
.vtools .spin button { flex: none; width: 11px; height: 8px; border: 1px solid #bbb; background: #f4f4f4; }
.spin .up::after { border-bottom-color: #222; }
.spin .down::after { border-top-color: #222; }
.tail { flex: 0 0 236px; display: flex; align-items: center; height: 20px; background: linear-gradient(90deg, transparent 163px, #eeeff0 164px); }
.stage { flex: 1; min-height: 0; display: flex; border-top: 1px solid #aab0b5; }
.side { flex: none; width: 18px; padding-top: 2px; background: #ededed; }
.vis { flex-direction: column; justify-content: flex-start; gap: 3px; width: 16px; height: 73px; padding-top: 2px; border: 1px solid #b3b3b3; background: #f3f3f3; font-family: "Liberation Sans", sans-serif; }
.vis svg { width: 14px; height: 14px; }
.vis span, .docks span { writing-mode: vertical-rl; }
.canvas { flex: 1; width: 0; height: 100%; background: #000; }
.ticks { font: bold 4px "Liberation Sans", sans-serif; }
.compass { font: 11px "Liberation Sans", sans-serif; fill: #fff; }

/* docked tabs */
.docks { flex: none; width: 21px; padding: 3px 0 0 4px; display: flex; flex-direction: column; gap: 9px; font: 10px/12px "Liberation Sans", sans-serif; color: #6b6550; border-left: 1px solid #fff; }
.docks button { flex-direction: column; justify-content: flex-start; gap: 3px; width: 16px; height: 114px; padding-top: 1px; border: 1px solid #b9b08c; border-right: 0; background: linear-gradient(90deg, #fdeebe, #fbd06a); }
.docks svg { width: 14px; height: 14px; }

.shade { position: absolute; inset: auto 0 0 0; height: 100px; background: linear-gradient(transparent, rgba(0, 0, 0, .28)); pointer-events: none; }
.ghost { position: absolute; left: 5px; top: 352px; width: 10px; height: 16px; opacity: .7; }
```
